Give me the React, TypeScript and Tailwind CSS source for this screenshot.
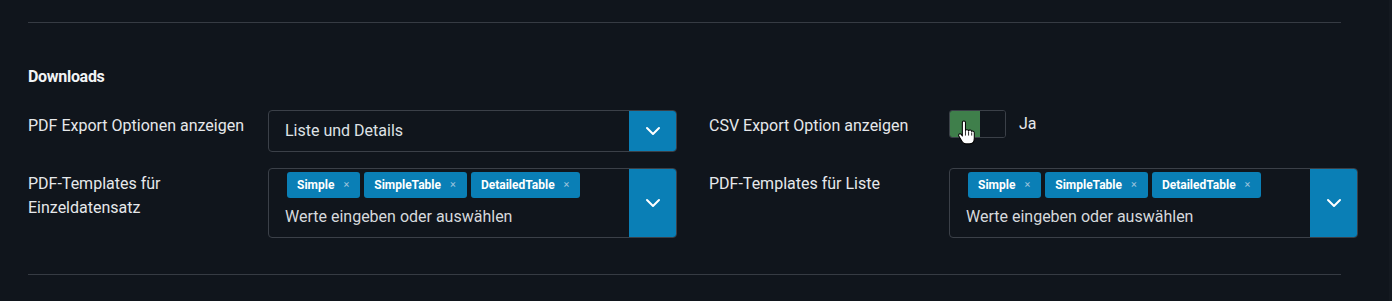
import React from "react";

const FONT = { fontFamily: "Roboto, 'Noto Sans', sans-serif" };

function Chevron() {
  return (
    <svg width="16" height="10" viewBox="0 0 16 10" fill="none" aria-hidden>
      <path d="M2 2l6 6 6-6" stroke="white" strokeWidth="2" strokeLinecap="round" strokeLinejoin="round" />
    </svg>
  );
}

function Tag({ label }: { label: string }) {
  return (
    <span className="inline-flex h-[26px] items-center gap-[9px] rounded-[3px] bg-[#0a7fb6] pl-[10px] pr-[11px] text-[12px] font-bold text-white">
      {label}
      <span className="text-[11px] font-normal text-[#9cc3dd]">×</span>
    </span>
  );
}

function SingleSelect({ value }: { value: string }) {
  return (
    <div className="flex h-[42px] w-[409px] overflow-hidden rounded-[4px] border border-[#3b4048]">
      <div className="flex flex-1 items-center pl-4 text-[16px] text-[#dfe2e6]">{value}</div>
      <div className="flex w-[47px] items-center justify-center bg-[#0a7fb6]">
        <Chevron />
      </div>
    </div>
  );
}

function MultiSelect({ tags }: { tags: string[] }) {
  return (
    <div className="flex h-[70px] w-[409px] overflow-hidden rounded-[4px] border border-[#3b4048]">
      <div className="flex flex-1 flex-col pl-[16px] pt-[3px]">
        <div className="ml-[2px] flex gap-[4px]">
          {tags.map((t) => (
            <Tag key={t} label={t} />
          ))}
        </div>
        <div className="mt-[9px] text-[16px] leading-[20px] text-[#d6d9dd]">Werte eingeben oder auswählen</div>
      </div>
      <div className="flex w-[47px] items-center justify-center bg-[#0a7fb6]">
        <Chevron />
      </div>
    </div>
  );
}

function HandCursor() {
  return (
    <svg className="absolute left-[8px] top-[10px]" width="19" height="27" viewBox="0 0 18 26" aria-hidden>
      <path
        d="M5 2.5c0-1 .7-1.5 1.5-1.5S8 1.5 8 2.5V10c.3-.8 2.8-.9 3 .4.4-1 2.7-1 3 .6.5-.6 2.5-.5 2.5 1.2v5.3c0 3-1.6 5.5-4.8 5.5H8.3c-1.6 0-2.8-.9-3.6-2.3L1.6 15.3c-.6-1 .1-2 1.1-2 .6 0 1.2.4 1.600 1L5 15.4z"
        fill="white"
        stroke="black"
        strokeWidth="1"
        strokeLinejoin="round"
      />
      <path d="M8 10v5M11 11v4M14 12v3" stroke="black" strokeWidth="0.8" />
    </svg>
  );
}

function Toggle() {
  return (
    <div className="flex h-[28px] items-center gap-[13px]">
      <div className="relative">
        <div className="flex h-[28px] w-[57px] overflow-hidden rounded-[3px] border border-[#3b4048]">
          <div className="w-[30px] bg-[#3f7f4b]" />
          <div className="flex-1 bg-[#10151c]" />
        </div>
        <HandCursor />
      </div>
      <span className="text-[16px] text-[#e6e8eb]">Ja</span>
    </div>
  );
}

const LABEL = "pt-[4px] text-[16px] leading-[24px] text-[#e6e8eb]";

export default function App() {
  return (
    <div className="flex h-[301px] w-[1392px] bg-[#10151c]" style={FONT}>
      <div className="flex-1 pl-[28px] pt-[22px]">
        <div className="h-px w-[1313px] bg-[#363b43]" />
        <h2 className="mt-[44px] text-[16px] font-bold leading-[20px] tracking-[-0.3px] text-[#f1f3f5]">Downloads</h2>
        <div className="mt-[23px] grid grid-cols-[240px_409px_32px_240px_409px] gap-y-[16px]">
          <div className={LABEL}>PDF Export Optionen anzeigen</div>
          <SingleSelect value="Liste und Details" />
          <div />
          <div className={LABEL}>CSV Export Option anzeigen</div>
          <Toggle />

          <div className={LABEL}>
            PDF-Templates für
            <br />
            Einzeldatensatz
          </div>
          <MultiSelect tags={["Simple", "SimpleTable", "DetailedTable"]} />
          <div />
          <div className={LABEL}>PDF-Templates für Liste</div>
          <MultiSelect tags={["Simple", "SimpleTable", "DetailedTable"]} />
        </div>
        <div className="mt-[36px] h-px w-[1313px] bg-[#363b43]" />
      </div>
      <div className="w-[3px] bg-[#141920]" />
    </div>
  );
}
